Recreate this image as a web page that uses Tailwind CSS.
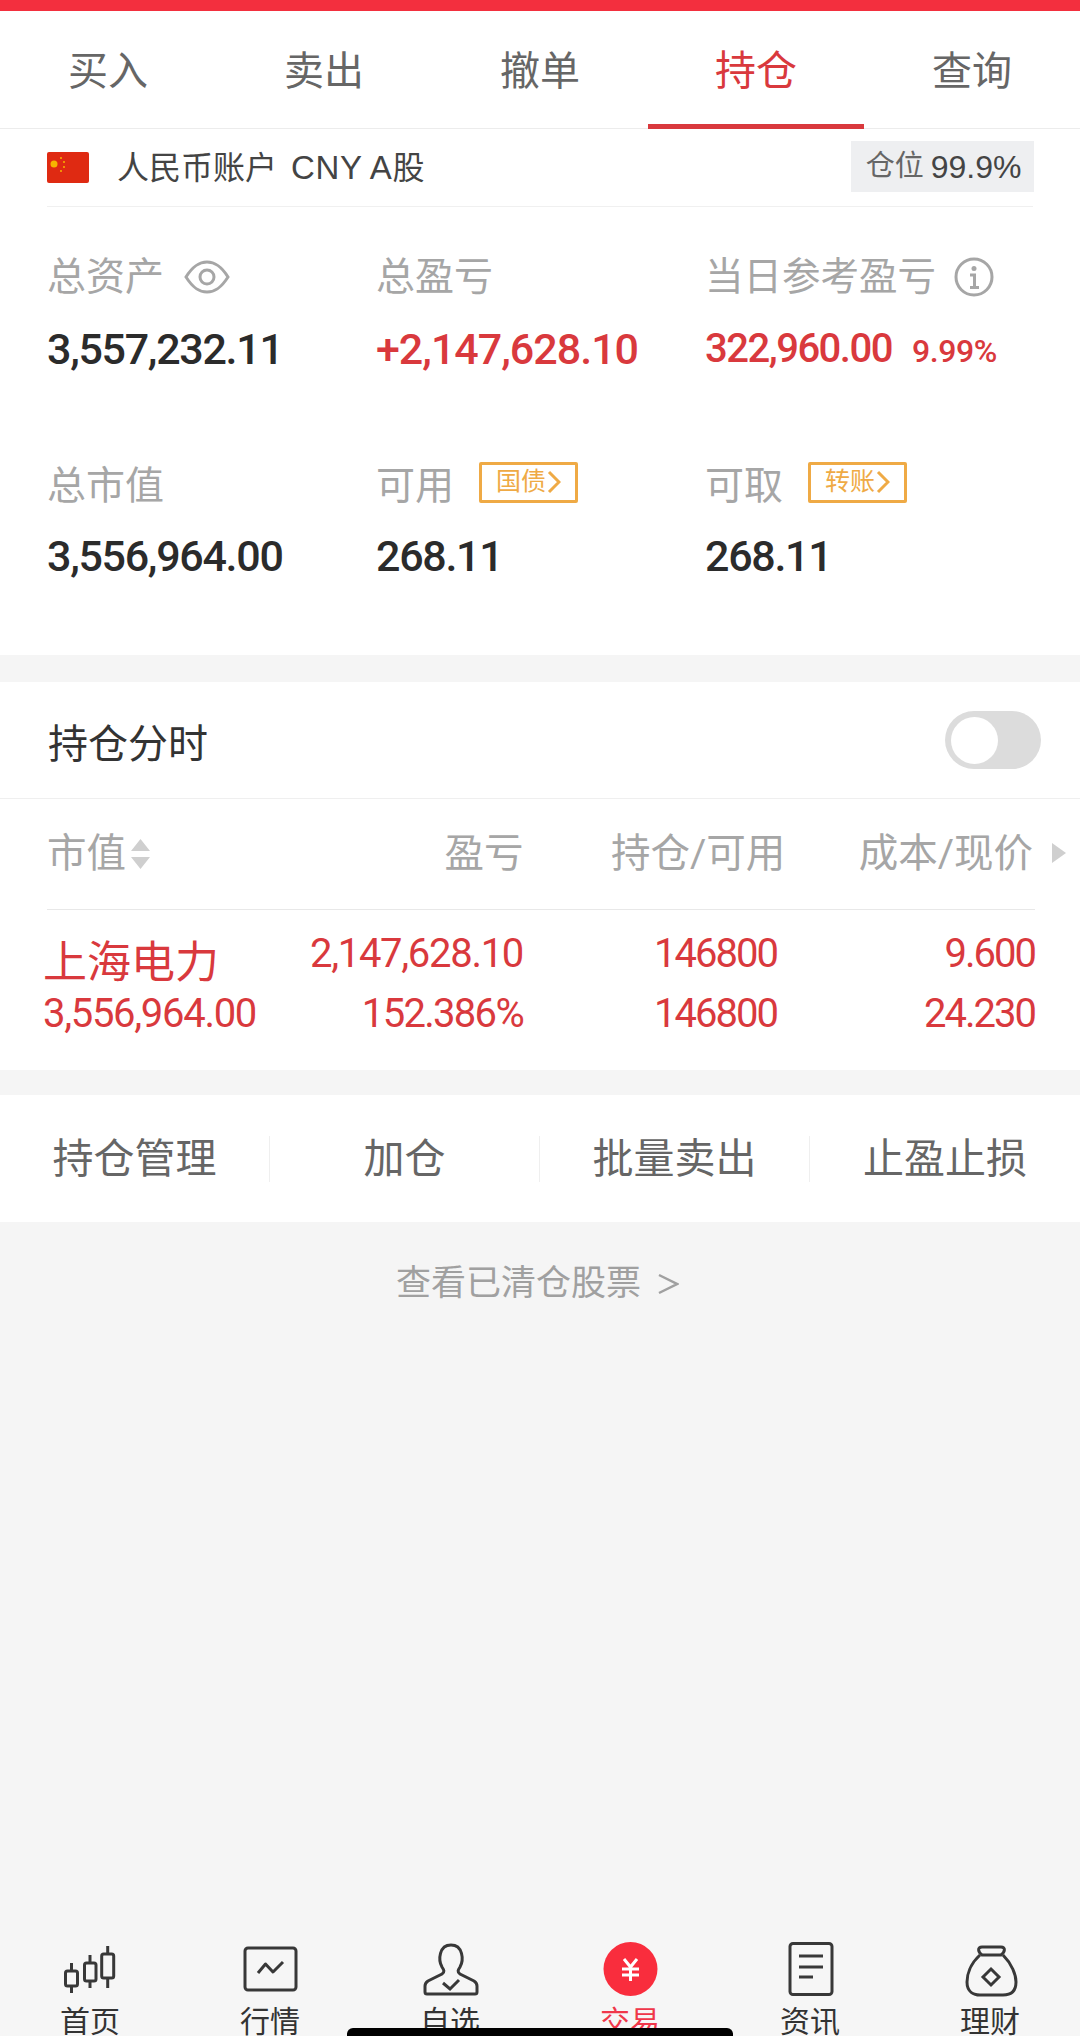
<!DOCTYPE html>
<html lang="zh">
<head>
<meta charset="utf-8">
<script src="https://cdn.jsdelivr.net/npm/@tailwindcss/browser@4"></script>
</head>
<body class="m-0">
<div class="relative flex h-[2036px] w-[1080px] flex-col overflow-hidden bg-[#f5f5f5] font-['Roboto','Noto_Sans_CJK_SC',sans-serif] text-[#333]">
  <div class="h-[11px] shrink-0 bg-[#f32f3e]"></div>

  <!-- tabs -->
  <div class="grid h-[118px] shrink-0 grid-cols-5 border-b border-[#ececec] bg-white text-center text-[40px] text-[#666]">
    <div class="flex items-center justify-center pt-[4px]">买入</div>
    <div class="flex items-center justify-center pt-[4px]">卖出</div>
    <div class="flex items-center justify-center pt-[4px]">撤单</div>
    <div class="relative -mb-px flex items-center justify-center border-b-[5px] border-[#d9393d] pt-[8px] text-[41px] text-[#d9393d]">持仓</div>
    <div class="flex items-center justify-center pt-[4px]">查询</div>
  </div>

  <!-- account -->
  <div class="shrink-0 bg-white px-[47px]">
    <div class="flex h-[78px] items-center justify-between border-b border-[#f0f0f0]">
      <div class="flex items-center">
        <svg class="mr-[28px]" width="42" height="31" viewBox="0 0 42 31"><rect width="42" height="31" rx="2" fill="#df2a12"/><circle cx="7" cy="12" r="3.5" fill="#f7b500"/><circle cx="14" cy="6" r="1" fill="#f7b500"/><circle cx="17" cy="10" r="1" fill="#f7b500"/><circle cx="17" cy="15" r="1" fill="#f7b500"/><circle cx="14" cy="19" r="1" fill="#f7b500"/></svg>
        <span class="whitespace-nowrap text-[32px] leading-none text-[#444]">人民币账户<span class="ml-[14px] font-['Liberation_Sans','Noto_Sans_CJK_SC',sans-serif] text-[33px] tracking-[0.6px]">CNY A</span>股</span>
      </div>
      <div class="-mr-[1px] mb-[2px] flex h-[51px] w-[183px] items-center justify-center whitespace-nowrap bg-[#eeeff1] pl-[2px] text-[29px] text-[#666]">仓位<span class="ml-[7px] font-['Liberation_Sans',sans-serif] text-[32px] text-[#444]">99.9%</span></div>
    </div>
  </div>

  <!-- summary -->
  <div class="grid h-[448px] shrink-0 grid-cols-[329px_329px_1fr] content-start gap-y-[82px] bg-white pl-[47px] pt-[45px]">
    <div>
      <div class="flex h-[50px] items-center text-[39px] text-[#a6a6a6]">总资产
        <svg class="ml-[20px]" width="46" height="36" viewBox="0 0 46 36" fill="none" stroke="#a6a6a6" stroke-width="3"><path d="M2 18C9 7 15 3 23 3s14 4 21 15c-7 11-13 15-21 15S9 29 2 18Z"/><circle cx="23" cy="18" r="7"/></svg>
      </div>
      <div class="mt-[17px] h-[60px] text-[43px] font-medium leading-[60px] tracking-[-1.3px] text-[#2b2b2b]">3,557,232.11</div>
    </div>
    <div>
      <div class="flex h-[50px] items-center text-[39px] text-[#a6a6a6]">总盈亏</div>
      <div class="mt-[17px] h-[60px] text-[43px] font-medium leading-[60px] tracking-[-1px] text-[#d9393d]">+2,147,628.10</div>
    </div>
    <div>
      <div class="flex h-[50px] items-center whitespace-nowrap text-[38.5px] text-[#a6a6a6]">当日参考盈亏
        <svg class="ml-[18px]" width="40" height="40" viewBox="0 0 40 40" fill="none" stroke="#a6a6a6" stroke-width="3"><circle cx="20" cy="20" r="18"/><circle cx="20" cy="11.5" r="2.5" fill="#a6a6a6" stroke="none"/><path d="M16 18h4.500v12M16 30.500h9"/></svg>
      </div>
      <div class="mt-[17px] flex h-[60px] items-baseline whitespace-nowrap font-medium leading-[60px] text-[#d9393d]"><span class="text-[40px] tracking-[-1.5px]">322,960.00</span><span class="ml-[20px] text-[32px] tracking-[-0.4px]">9.99%</span></div>
    </div>

    <div>
      <div class="flex h-[50px] items-center text-[39px] text-[#a6a6a6]">总市值</div>
      <div class="mt-[15px] h-[60px] text-[43px] font-medium leading-[60px] tracking-[-1.3px] text-[#2b2b2b]">3,556,964.00</div>
    </div>
    <div>
      <div class="flex h-[50px] items-center text-[39px] text-[#a6a6a6]">可用
        <span class="ml-[25px] mt-[-8px] flex h-[41px] w-[99px] items-center justify-center gap-[1px] rounded-[2px] border-[3px] border-[#efaa45] text-[25px] text-[#efaa45]">国债<svg width="14" height="24" viewBox="0 0 14 24" fill="none" stroke="#efaa45" stroke-width="3"><path d="M2 2l10 10L2 22"/></svg></span>
      </div>
      <div class="mt-[15px] h-[60px] text-[43px] font-medium leading-[60px] tracking-[-1.3px] text-[#2b2b2b]">268.11</div>
    </div>
    <div>
      <div class="flex h-[50px] items-center text-[39px] text-[#a6a6a6]">可取
        <span class="ml-[25px] mt-[-8px] flex h-[41px] w-[99px] items-center justify-center gap-[1px] rounded-[2px] border-[3px] border-[#efaa45] text-[25px] text-[#efaa45]">转账<svg width="14" height="24" viewBox="0 0 14 24" fill="none" stroke="#efaa45" stroke-width="3"><path d="M2 2l10 10L2 22"/></svg></span>
      </div>
      <div class="mt-[15px] h-[60px] text-[43px] font-medium leading-[60px] tracking-[-1.3px] text-[#2b2b2b]">268.11</div>
    </div>
  </div>

  <!-- holdings -->
  <div class="mt-[27px] shrink-0 bg-white">
    <div class="flex h-[117px] items-center justify-between border-b border-[#efefef] pl-[48px] pr-[39px]">
      <span class="pt-[10px] text-[40px]">持仓分时</span>
      <span class="flex h-[58px] w-[96px] items-center rounded-full bg-[#dcdcdc] pl-[6px]"><span class="h-[47px] w-[47px] rounded-full bg-white"></span></span>
    </div>

    <div class="relative flex h-[110px] items-center px-[47px] text-[39.5px] text-[#a6a6a6]">
      <div class="flex w-[207px] items-center">市值
        <svg class="ml-[4px]" width="21" height="32" viewBox="0 0 21 32" fill="#cfcfcf"><path d="M10.500 1L20 13H1ZM10.500 31L1 19H20Z"/></svg>
      </div>
      <div class="w-[270px] text-right">盈亏</div>
      <div class="w-[262px] whitespace-nowrap text-right">持仓/可用</div>
      <div class="w-[248px] whitespace-nowrap text-right">成本/现价</div>
      <svg class="absolute left-[1052px] top-[44px]" width="14" height="20" viewBox="0 0 14 20" fill="#cfcfcf"><path d="M0 0L14 10L0 20Z"/></svg>
    </div>

    <div class="pl-[47px] pr-[45px]"><div class="h-px bg-[#e8e8e8]"></div></div>

    <div class="grid h-[160px] grid-cols-[210px_270px_254px_258px] grid-rows-[60px_59px] content-start pl-[43px] pt-[14px] text-[40px] leading-[59px] tracking-[-1.3px] text-[#d9393d]">
      <div class="mt-[10px] whitespace-nowrap text-[44px] tracking-normal">上海电力</div>
      <div class="text-right">2,147,628.10</div>
      <div class="text-right tracking-[-2px]">146800</div>
      <div class="text-right tracking-[-2px]">9.600</div>
      <div class="whitespace-nowrap">3,556,964.00</div>
      <div class="text-right tracking-[-1.7px]">152.386%</div>
      <div class="text-right tracking-[-2px]">146800</div>
      <div class="text-right tracking-[-2px]">24.230</div>
    </div>
  </div>

  <!-- actions -->
  <div class="mt-[25px] grid h-[127px] shrink-0 grid-cols-4 items-center bg-white text-center text-[41px] text-[#666]">
    <div class="flex h-[46px] items-center justify-center border-r border-[#efefef] pt-[3px]">持仓管理</div>
    <div class="flex h-[46px] items-center justify-center border-r border-[#efefef] pt-[3px]">加仓</div>
    <div class="flex h-[46px] items-center justify-center border-r border-[#efefef] pt-[3px]">批量卖出</div>
    <div class="flex h-[46px] items-center justify-center pt-[3px]">止盈止损</div>
  </div>

  <div class="mt-[39px] flex h-[46px] shrink-0 items-center justify-center gap-[16px] pr-[5px] text-[35px] text-[#a0a0a0]">查看已清仓股票
    <svg width="22" height="24" viewBox="0 0 22 24" fill="none" stroke="#a0a0a0" stroke-width="2.500"><path d="M2 3l18 9L2 21"/></svg>
  </div>

  <div class="flex-1"></div>

  <!-- bottom nav -->
  <div class="grid h-[96px] shrink-0 grid-cols-6 bg-[#f6f6f6] text-center text-[30px] leading-[30px]">
    <div class="flex flex-col items-center">
      <svg width="60" height="60" viewBox="0 0 60 60" fill="none" stroke="#383838" stroke-width="3"><rect x="5.500" y="31" width="12" height="15" rx="2"/><path d="M11.500 23v8M11.500 46v7"/><rect x="24.500" y="23" width="11.500" height="18" rx="2"/><path d="M30 15v8M30 41v7"/><rect x="41.700" y="14" width="12" height="24" rx="2"/><path d="M47.700 6v8M47.700 38v10"/></svg>
      <span class="mt-[7px]">首页</span>
    </div>
    <div class="flex flex-col items-center">
      <svg width="60" height="60" viewBox="0 0 60 60" fill="none" stroke="#383838" stroke-width="3"><rect x="5" y="8" width="51" height="42" rx="3"/><path d="M18 33l7.500-9 7.500 8 10-10" stroke-linejoin="round"/></svg>
      <span class="mt-[7px]">行情</span>
    </div>
    <div class="flex flex-col items-center">
      <svg width="60" height="60" viewBox="0 0 60 60" fill="none" stroke="#383838" stroke-width="3"><path d="M22 27C18 20 19 5 31 5c12 0 13 15 9 22-2 3-3 5 0 7l14 7q3 2 3 5v6q0 2-2 2H7q-2 0-2-2v-6q0-3 3-5l14-7c3-2 2-4 0-7Z"/><path d="M23 43l7 6 9-9"/></svg>
      <span class="mt-[7px]">自选</span>
    </div>
    <div class="flex flex-col items-center text-[#f0374a]">
      <svg width="60" height="60" viewBox="0 0 60 60" fill="none"><circle cx="30.500" cy="29" r="27" fill="#f92d3d"/><path d="M24 19l6.500 8 6.500-8M22 29h17M22 35h17M30.500 27v14" stroke="#fff" stroke-width="3"/></svg>
      <span class="mt-[7px]">交易</span>
    </div>
    <div class="flex flex-col items-center">
      <svg width="60" height="60" viewBox="0 0 60 60" fill="none" stroke="#383838" stroke-width="3"><rect x="10" y="3.500" width="42" height="51" rx="3"/><path d="M19 16h24M19 27h24M19 37h14"/></svg>
      <span class="mt-[7px]">资讯</span>
    </div>
    <div class="flex flex-col items-center">
      <svg width="60" height="60" viewBox="0 0 60 60" fill="none" stroke="#383838" stroke-width="3"><path d="M20 15C10 24 7 35 7 42c0 10 7 13 13 13h23c7 0 13-3 13-13 0-7-4-18-13-27"/><path d="M22 15c-4-3-5-8 0-8h19c5 0 4 5 0 8Z"/><path d="M31 29l8 8-8 8-8-8Z"/></svg>
      <span class="mt-[7px]">理财</span>
    </div>
  </div>

  <div class="absolute bottom-0 left-[347px] h-[8px] w-[386px] rounded-t-[6px] bg-black"></div>
</div>
</body>
</html>
